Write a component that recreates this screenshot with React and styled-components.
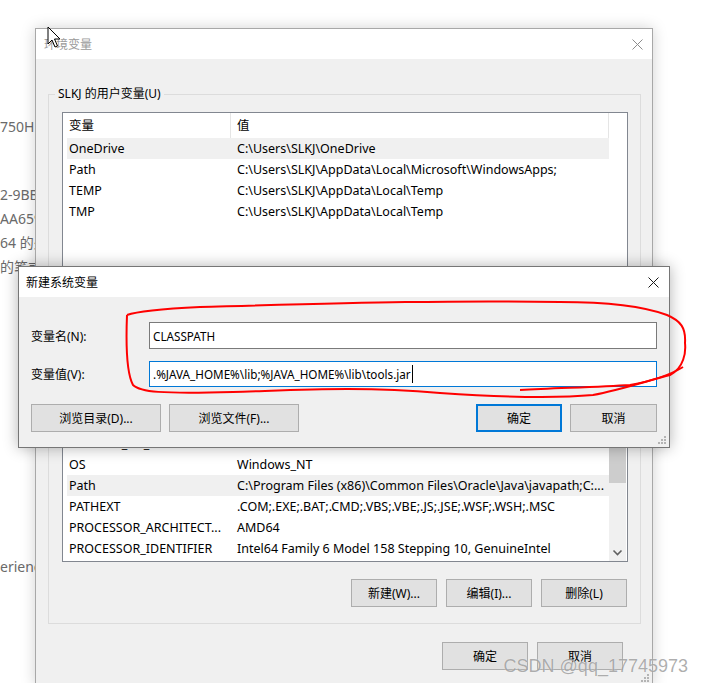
import React from "react";
import styled, { createGlobalStyle } from "styled-components";

//#region Styled Components
const GlobalStyle = createGlobalStyle`
  html, body {
    margin: 0;
    padding: 0;
    background: #ffffff;
  }
  body {
    font-family: "Noto Sans", "Noto Sans CJK SC", sans-serif;
    font-size: 12px;
    color: #000;
  }
`;

const Desktop = styled.div`
  position: relative;
  width: 704px;
  height: 683px;
  overflow: hidden;
  background: #ffffff;
`;

const BackLines = styled.div`
  width: 35px;
  overflow: hidden;
  display: flex;
  flex-flow: column nowrap;
  font-family: "Noto Sans", "Noto Sans CJK SC", sans-serif;
  font-size: 14px;
  color: #6a6a6a;
`;
const BackLine = styled.div`
  height: 24px;
  line-height: 24px;
  white-space: nowrap;
  margin-top: ${p => p.$top || 0}px;
`;

const Window = styled.div`
  position: absolute;
  left: ${p => p.$x}px;
  top: ${p => p.$y}px;
  width: ${p => p.$w}px;
  height: ${p => p.$h}px;
  box-sizing: border-box;
  border: 1px solid ${p => p.$border};
  background: #f0f0f0;
  box-shadow: 0 0 14px rgba(0, 0, 0, ${p => p.$shadow});
  display: flex;
  flex-flow: column nowrap;
`;
const TitleBar = styled.div`
  height: 30px;
  flex: none;
  background: #ffffff;
  display: flex;
  align-items: center;
  justify-content: space-between;
  padding-left: ${p => p.$pad}px;
`;
const Title = styled.span`
  color: ${p => (p.$inactive ? "#9a9a9a" : "#000")};
  font-size: 12px;
`;
const Close = styled.svg`
  width: 11px;
  height: 11px;
  margin-right: ${p => p.$mr}px;
  stroke: ${p => (p.$inactive ? "#8c8c8c" : "#1a1a1a")};
  stroke-width: 1;
`;

const MainBody = styled.div`
  flex: 1;
  display: flex;
  flex-flow: column nowrap;
  padding: 35px 11px 0 12px;
`;
const Group = styled.div`
  position: relative;
  border: 1px solid #dcdcdc;
  padding: 17px 12px 16px 13px;
  margin-top: ${p => p.$mt || 0}px;
  display: flex;
  flex-flow: column nowrap;
`;
const GroupLabel = styled.span`
  position: absolute;
  top: -9px;
  left: 6px;
  padding: 0 3px;
  line-height: 16px;
  background: #f0f0f0;
`;

const ListView = styled.div`
  box-sizing: border-box;
  height: ${p => p.$h}px;
  border: 1px solid #828790;
  background: #ffffff;
  display: flex;
  overflow: hidden;
  font-size: 12.5px;
`;
const ListContent = styled.div`
  flex: 1;
  display: flex;
  flex-flow: column nowrap;
  overflow: hidden;
`;
const HeaderRow = styled.div`
  height: 25px;
  flex: none;
  display: grid;
  grid-template-columns: 168px 1fr;
`;
const HeaderCell = styled.div`
  border-right: 1px solid #e5e5e5;
  padding-left: 6px;
  line-height: 25px;
`;
const Row = styled.div`
  height: 21px;
  flex: none;
  margin-left: 4px;
  display: grid;
  grid-template-columns: 168px 1fr;
  background: ${p => (p.$selected ? "#f0f0f0" : "transparent")};
`;
const Cell = styled.div`
  padding-left: 2px;
  line-height: 21px;
  white-space: nowrap;
  overflow: hidden;
`;
const ScrollTrack = styled.div`
  width: 17px;
  margin-right: 1px;
  display: flex;
  flex-flow: column nowrap;
  justify-content: ${p => (p.$empty ? "flex-start" : "space-between")};
  background: ${p => (p.$empty ? "transparent" : "#f0f0f0")};
`;
const ScrollThumb = styled.div`
  height: 35px;
  margin-top: ${p => p.$offset}px;
  background: #cdcdcd;
`;
const ScrollArrow = styled.svg`
  width: 17px;
  height: 17px;
  flex: none;
  fill: none;
  stroke: #606060;
  stroke-width: 1.6;
`;

const ButtonRow = styled.div`
  display: flex;
  align-items: center;
  gap: ${p => p.$gap || 9}px;
  justify-content: ${p => p.$justify || "flex-end"};
  margin-top: ${p => p.$mt || 0}px;
  padding-right: ${p => p.$pr || 0}px;
`;
const Button = styled.button`
  box-sizing: border-box;
  width: ${p => p.$w || 86}px;
  height: 28px;
  padding: 0;
  margin: 0;
  font-family: inherit;
  font-size: 12px;
  color: #000;
  background: #e1e1e1;
  border: ${p => (p.$primary ? "2px solid #0078d7" : "1px solid #adadad")};
`;
const Spacer = styled.div`
  flex: 1;
`;

const DialogBody = styled.div`
  flex: 1;
  display: flex;
  flex-flow: column nowrap;
  padding: 25px 12px 0 12px;
`;
const FieldRow = styled.div`
  display: flex;
  align-items: center;
  margin-top: ${p => p.$mt || 0}px;
`;
const FieldLabel = styled.label`
  width: 118px;
  flex: none;
`;
const TextField = styled.div`
  box-sizing: border-box;
  flex: 1;
  height: ${p => p.$h}px;
  border: 1px solid ${p => (p.$focused ? "#0078d7" : "#7a7a7a")};
  background: #ffffff;
  padding-left: 3px;
  display: flex;
  align-items: center;
  white-space: nowrap;
  font-size: 11.7px;
`;
const Caret = styled.span`
  display: inline-block;
  width: 1px;
  height: 18px;
  background: #000;
  margin-left: 1px;
`;

const Grip = styled.svg`
  position: absolute;
  right: 2px;
  bottom: 2px;
  width: 10px;
  height: 10px;
  fill: #b4b4b4;
`;

const Overlay = styled.svg`
  position: absolute;
  left: 0;
  top: 0;
  width: 704px;
  height: 683px;
  pointer-events: none;
`;

const Watermark = styled.div`
  position: absolute;
  right: 16px;
  bottom: 6px;
  font-family: "Liberation Sans", Arial, sans-serif;
  font-size: 18px;
  color: rgba(120, 120, 120, 0.6);
  text-shadow: 0 0 1px rgba(255, 255, 255, 0.8);
  white-space: nowrap;
`;
//#endregion

const userVars = [
  ["OneDrive", "C:\\Users\\SLKJ\\OneDrive"],
  ["Path", "C:\\Users\\SLKJ\\AppData\\Local\\Microsoft\\WindowsApps;"],
  ["TEMP", "C:\\Users\\SLKJ\\AppData\\Local\\Temp"],
  ["TMP", "C:\\Users\\SLKJ\\AppData\\Local\\Temp"]
];

const sysVars = [
  ["ComSpec", "C:\\Windows\\system32\\cmd.exe"],
  ["DriverData", "C:\\Windows\\System32\\Drivers\\DriverData"],
  ["NUMBER_OF_PROCESSORS", "12"],
  ["OS", "Windows_NT"],
  ["Path", "C:\\Program Files (x86)\\Common Files\\Oracle\\Java\\javapath;C:..."],
  ["PATHEXT", ".COM;.EXE;.BAT;.CMD;.VBS;.VBE;.JS;.JSE;.WSF;.WSH;.MSC"],
  ["PROCESSOR_ARCHITECT...", "AMD64"],
  ["PROCESSOR_IDENTIFIER", "Intel64 Family 6 Model 158 Stepping 10, GenuineIntel"]
];

const CloseIcon = ({ inactive, mr }) => (
  <Close viewBox="0 0 11 11" $inactive={inactive} $mr={mr}>
    <path d="M0.5 0.5 L10.5 10.5 M10.5 0.5 L0.5 10.5" />
  </Close>
);

const GripIcon = () => (
  <Grip viewBox="0 0 10 10">
    <rect x="7" y="1" width="2" height="2" />
    <rect x="4" y="4" width="2" height="2" />
    <rect x="7" y="4" width="2" height="2" />
    <rect x="1" y="7" width="2" height="2" />
    <rect x="4" y="7" width="2" height="2" />
    <rect x="7" y="7" width="2" height="2" />
  </Grip>
);

const VarList = ({ rows, height, selected, scroll }) => (
  <ListView $h={height}>
    <ListContent>
      <HeaderRow>
        <HeaderCell>变量</HeaderCell>
        <HeaderCell>值</HeaderCell>
      </HeaderRow>
      {rows.map(([name, value], i) => (
        <Row key={name + i} $selected={i === selected}>
          <Cell>{name}</Cell>
          <Cell>{value}</Cell>
        </Row>
      ))}
    </ListContent>
    {scroll ? (
      <ScrollTrack>
        <ScrollThumb $offset={82} />
        <ScrollArrow viewBox="0 0 17 17">
          <path d="M4.5 6.5 L8.5 10.5 L12.5 6.5" />
        </ScrollArrow>
      </ScrollTrack>
    ) : (
      <ScrollTrack $empty />
    )}
  </ListView>
);

const App = () => {
  return (
    <Desktop>
      <GlobalStyle />
      <BackLines>
        <BackLine $top={115}>750H CPU</BackLine>
        <BackLine $top={44}>2-9BB7</BackLine>
        <BackLine>AA6593</BackLine>
        <BackLine>64 的处理器</BackLine>
        <BackLine>的笔或触控</BackLine>
        <BackLine $top={276}>erience</BackLine>
      </BackLines>

      <Window $x={35} $y={28} $w={618} $h={658} $border="#a8a8a8" $shadow={0.18}>
        <TitleBar $pad={8}>
          <Title $inactive>环境变量</Title>
          <CloseIcon inactive mr={9} />
        </TitleBar>
        <MainBody>
          <Group>
            <GroupLabel>SLKJ 的用户变量(U)</GroupLabel>
            <VarList rows={userVars} height={160} selected={0} />
            <ButtonRow $mt={17}>
              <Button>新建(N)...</Button>
              <Button>编辑(E)...</Button>
              <Button>删除(D)</Button>
            </ButtonRow>
          </Group>
          <Group $mt={13}>
            <GroupLabel>系统变量(S)</GroupLabel>
            <VarList rows={sysVars} height={197} selected={4} scroll />
            <ButtonRow $mt={17} $pr={1}>
              <Button>新建(W)...</Button>
              <Button>编辑(I)...</Button>
              <Button>删除(L)</Button>
            </ButtonRow>
          </Group>
          <ButtonRow $mt={18} $pr={18}>
            <Button>确定</Button>
            <Button>取消</Button>
          </ButtonRow>
        </MainBody>
        <GripIcon />
      </Window>

      <Window $x={18} $y={266} $w={652} $h={182} $border="#767676" $shadow={0.3}>
        <TitleBar $pad={7}>
          <Title>新建系统变量</Title>
          <CloseIcon mr={10} />
        </TitleBar>
        <DialogBody>
          <FieldRow>
            <FieldLabel>变量名(N):</FieldLabel>
            <TextField $h={27}>CLASSPATH</TextField>
          </FieldRow>
          <FieldRow $mt={12}>
            <FieldLabel>变量值(V):</FieldLabel>
            <TextField $h={26} $focused>
              .%JAVA_HOME%\lib;%JAVA_HOME%\lib\tools.jar
              <Caret />
            </TextField>
          </FieldRow>
          <ButtonRow $mt={17} $gap={8} $justify="flex-start">
            <Button $w={130}>浏览目录(D)...</Button>
            <Button $w={130}>浏览文件(F)...</Button>
            <Spacer />
            <Button $primary>确定</Button>
            <Button $w={87}>取消</Button>
          </ButtonRow>
        </DialogBody>
        <GripIcon />
      </Window>

      <Overlay viewBox="0 0 704 683">
        <path
          d="M127 315 C126 340 126 372 133 385 C140 392 160 394 233 392 C300 390 360 386 440 393 C500 397 560 398 593 395 C620 390 650 380 670 375 C684 368 686 352 685 343 C686 328 681 321 667 315 C640 305 600 302 560 302 C450 300 350 303 200 307 C160 309 138 311 127 315"
          fill="none"
          stroke="#ff0000"
          strokeWidth="2"
        />
        <path
          d="M520 390 C560 388 600 387 630 385 C652 381 670 375 683 367"
          fill="none"
          stroke="#ff0000"
          strokeWidth="2"
        />
        <path
          d="M48 27 L48 44 L52 40 L55 47 L57.5 46 L54.5 39 L60 39 Z"
          fill="#ffffff"
          stroke="#000000"
          strokeWidth="1"
          strokeLinejoin="round"
        />
      </Overlay>

      <Watermark>CSDN @qq_17745973</Watermark>
    </Desktop>
  );
};

export default App;
